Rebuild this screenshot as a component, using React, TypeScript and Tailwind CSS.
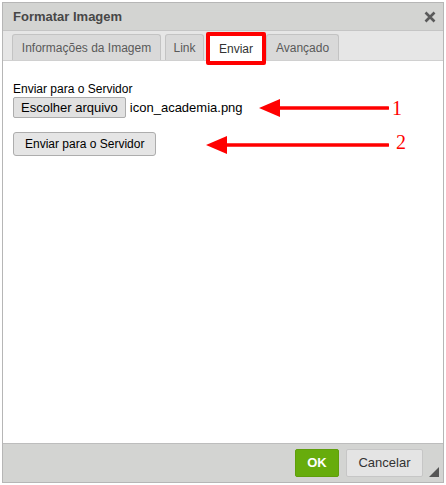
import React from "react";

const Arrow = ({ width }: { width: number }) => (
	<svg width={width} height={20} viewBox={`0 0 ${width} 20`}>
		<line x1={18} y1={10} x2={width - 1} y2={10} stroke="#ff0000" strokeWidth={3.5} strokeLinecap="round" />
		<polygon points={`0,10 21,1 21,19`} fill="#ff0000" />
	</svg>
);

const Tab = ({ label, className }: { label: string; className: string }) => (
	<div
		className={`h-[26px] flex items-center justify-center bg-[#d9d9d9] border border-b-0 border-[#c3c3c3] rounded-t-[3px] text-[12px] text-[#595959] ${className}`}
	>
		{label}
	</div>
);

export default function App() {
	return (
		<div className="w-[446px] h-[485px] bg-white pl-[2px] pt-[2px] font-['Liberation_Sans',Arial,sans-serif]">
			<div className="relative w-[442px] h-[481px] flex flex-col border border-[#b6b6b6] bg-white">
				{/* title */}
				<div className="h-[28px] flex items-center justify-between bg-[#d3d4d2] border-b border-[#c5c5c5] pl-[10px] pr-[7px]">
					<span className="text-[13px] font-bold text-[#474747]">Formatar Imagem</span>
					<svg width="12" height="12" viewBox="0 0 12 12">
						<path d="M1.5 1.5 L10.5 10.5 M10.5 1.5 L1.5 10.5" stroke="#5a5a5a" strokeWidth={2.6} />
					</svg>
				</div>
				{/* tabs */}
				<div className="h-[30px] flex items-end bg-[#e6e6e6] border-b border-[#d0d0d0] pl-[9px]">
					<Tab label="Informações da Imagem" className="w-[149px]" />
					<Tab label="Link" className="w-[39px] ml-[4px]" />
					<div className="h-[33px] -mb-[5px] ml-[2px] w-[60px] flex items-center justify-center bg-white border-[4px] border-[#ff0000] rounded-[2px] text-[12px] text-[#333] relative z-10">
						Enviar
					</div>
					<Tab label="Avançado" className="w-[73px]" />
				</div>
				{/* content */}
				<div className="relative flex-1 px-[10px] pt-[21px] text-black">
					<div className="text-[12px] leading-[14px]">Enviar para o Servidor</div>
					<div className="flex items-center gap-[4px] mt-[1px]">
						<button className="h-[21px] px-[7px] bg-[#e1e1e1] border border-[#adadad] rounded-[2px] text-[13px] text-black">
							Escolher arquivo
						</button>
						<span className="text-[13px]">icon_academia.png</span>
					</div>
					<button className="mt-[14px] h-[24px] px-[11px] bg-[#e5e5e5] border border-[#adadad] rounded-[3px] text-[12px] text-black">
						Enviar para o Servidor
					</button>
					<div className="absolute left-[256px] top-[37px]">
						<Arrow width={130} />
					</div>
					<span className="absolute left-[389px] top-[32px] text-[20px] text-[#ff0000] font-['Liberation_Serif',serif]">1</span>
					<div className="absolute left-[203px] top-[74px]">
						<Arrow width={183} />
					</div>
					<span className="absolute left-[393px] top-[66px] text-[20px] text-[#ff0000] font-['Liberation_Serif',serif]">2</span>
				</div>
				{/* footer */}
				<div className="relative h-[39px] flex items-center justify-end gap-[7px] bg-[#d3d4d2] border-t border-[#bdbdbd] pr-[20px]">
					<button className="h-[28px] w-[44px] bg-[#67ac0c] border border-[#5f9e0b] rounded-[2px] text-[13px] font-bold text-white">
						OK
					</button>
					<button className="h-[28px] w-[77px] bg-[#e4e4e4] border border-[#c6c6c6] rounded-[2px] text-[13px] text-[#333]">
						Cancelar
					</button>
					<svg className="absolute right-[4px] bottom-[5px]" width="10" height="10" viewBox="0 0 10 10">
						<polygon points="10,0 10,10 0,10" fill="#555" />
					</svg>
				</div>
			</div>
		</div>
	);
}
